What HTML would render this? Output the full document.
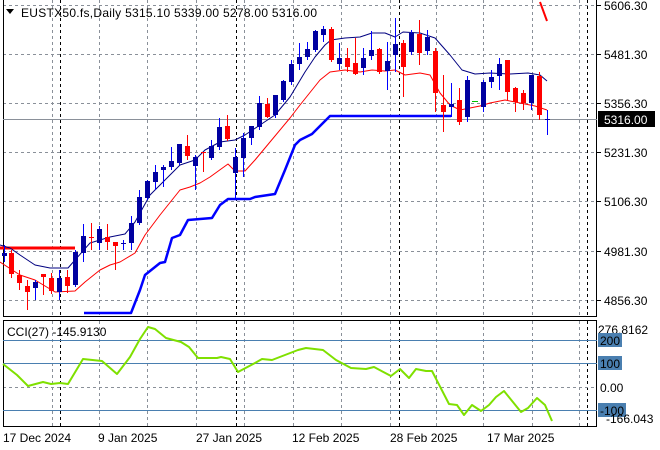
<!DOCTYPE html>
<html><head><meta charset="utf-8"><style>
html,body{margin:0;padding:0;background:#fff;width:660px;height:450px;overflow:hidden}
svg{display:block;font-family:"Liberation Sans",sans-serif}
</style></head><body>
<svg id="s" width="660" height="450" viewBox="0 0 660 450" xmlns="http://www.w3.org/2000/svg">
<rect width="660" height="450" fill="#fff"/>
<g id="grid" stroke="#8a9099" stroke-width="1" stroke-dasharray="3,3" fill="none"></g>
<g id="ind"></g>
<g id="cdl"></g>
<g id="txt" font-size="12" fill="#000"></g>
</svg>
<script>
var NS="http://www.w3.org/2000/svg";
function el(p,t,a,txt){var e=document.createElementNS(NS,t);for(var k in a)e.setAttribute(k,a[k]);if(txt!==undefined)e.textContent=txt;document.getElementById(p).appendChild(e);return e;}
[5,54,103,152,201,251,300].forEach(function(y){el('grid','line',{x1:3,x2:597,y1:y+.5,y2:y+.5});});
[52,99,147,196,244,293,341,390,436,483,532,579].forEach(function(x){el('grid','line',{x1:x+.5,x2:x+.5,y1:0,y2:316});el('grid','line',{x1:x+.5,x2:x+.5,y1:321,y2:426});});
[60,236,399,587].forEach(function(x){el('grid','line',{x1:x+.5,x2:x+.5,y1:0,y2:316,stroke:'#000'});el('grid','line',{x1:x+.5,x2:x+.5,y1:321,y2:426,stroke:'#000'});});
el('grid','line',{x1:3,x2:597,y1:387.5,y2:387.5});
el('ind','rect',{x:3.5,y:-1,width:593,height:317.5,fill:'none',stroke:'#000'});
el('ind','rect',{x:3.5,y:320.5,width:593,height:106,fill:'none',stroke:'#000'});
el('ind','line',{x1:3,x2:597,y1:119.5,y2:119.5,stroke:'#8a9099'});
[340,363,410].forEach(function(y){el('ind','line',{x1:3,x2:597,y1:y+.5,y2:y+.5,stroke:'#4a7fb0'});});
function pl(pts,c,w){el('ind','polyline',{points:pts.map(function(p){return p.join(',')}).join(' '),fill:'none',stroke:c,'stroke-width':w,'stroke-linejoin':'round'});}
pl([[0,248],[75,248]],'#ff0000',3);
pl([[540,2],[547,21]],'#ff0000',2);
pl([[84,313],[131,313],[140,290],[145,275],[160,263],[165,262],[172,238],[180,235],[188,220],[212,218],[220,205],[228,199],[250,199],[255,197],[275,194],[285,170],[295,145],[300,140],[312,134],[330,116],[451,116]],'#0000ff',2.5);
pl([[0,245],[10,248],[20,255],[35,265],[50,268],[68,268],[75,260],[90,243],[110,237],[125,234],[135,222],[150,195],[165,180],[180,165],[195,160],[205,150],[220,142],[235,140],[245,135],[260,125],[275,115],[290,97],[305,72],[315,57],[325,45],[331,40],[345,38],[360,37],[372,33],[385,33],[395,37],[403,32],[420,33],[435,38],[450,55],[462,70],[475,74],[490,73],[510,74],[528,73],[540,75],[547,81]],'#000080',1);
pl([[0,262],[20,275],[35,280],[55,292],[75,291],[85,282],[100,270],[110,265],[120,262],[135,253],[145,235],[160,215],[180,190],[190,187],[200,183],[210,177],[228,164],[235,171],[245,171],[255,160],[265,148],[290,118],[300,105],[320,80],[330,72],[345,70],[360,72],[372,70],[385,71],[395,70],[405,75],[420,73],[430,75],[440,93],[450,105],[460,110],[470,108],[480,106],[490,103],[505,100],[520,103],[535,106],[547,110]],'#ff0000',1);
pl([[3,364],[17,375],[28,386],[43,382],[51,384],[60,383],[68,384],[83,359],[102,361],[117,374],[130,357],[140,339],[148,327],[155,329],[166,338],[181,342],[189,347],[198,358],[217,358],[221,357],[230,359],[238,372],[255,363],[262,359],[272,360],[298,350],[306,348],[323,350],[336,360],[351,368],[366,369],[374,367],[391,376],[400,369],[409,378],[416,369],[426,371],[432,371],[449,404],[457,405],[464,415],[472,405],[481,411],[489,405],[496,397],[504,391],[521,412],[528,408],[537,398],[545,405],[552,421]],'#7fe000',2);
var C=[[4,'b',253,256,245,262],[11,'r',253,274,250,278],[19,'r',275,283,270,290],[27,'r',286,292,280,310],[35,'b',282,288,280,300],[43,'r',274,277,274,295],[51,'r',278,291,273,294],[59,'b',278,292,270,300],[67,'r',277,286,270,293],[75,'b',252,285,250,287],[83,'b',236,253,224,262],[91,'r',237,238,223,250],[99,'b',229,243,226,250],[107,'r',237,242,224,250],[115,'r',242,246,242,270],[123,'b',243,244,240,250],[131,'b',223,243,216,250],[139,'b',197,223,190,225],[147,'b',181,198,180,200],[155,'b',172,182,165,190],[163,'b',167,170,165,187],[171,'b',161,167,147,170],[179,'b',144,163,144,165],[187,'r',146,156,135,160],[195,'b',157,166,155,190],[203,'r',152,153,152,172],[211,'b',146,158,140,160],[219,'b',127,147,118,150],[227,'r',126,139,115,141],[235,'b',157,173,148,200],[243,'b',138,158,133,177],[251,'b',126,138,126,145],[259,'b',103,127,96,130],[267,'r',104,117,98,118],[275,'b',95,115,95,118],[283,'b',81,100,80,102],[291,'b',64,82,60,85],[299,'b',57,64,43,70],[307,'b',49,57,42,60],[315,'b',31,50,30,52],[323,'b',29,35,26,42],[331,'r',29,60,27,62],[339,'b',58,64,43,70],[347,'r',58,67,48,72],[355,'r',63,74,38,75],[363,'b',58,68,48,75],[371,'b',50,56,31,60],[379,'r',49,72,48,74],[387,'b',61,71,42,90],[395,'b',44,55,18,72],[403,'r',43,67,40,97],[411,'b',33,52,30,55],[419,'r',34,53,20,65],[427,'b',37,51,30,55],[435,'r',51,93,48,112],[443,'r',105,112,75,132],[451,'b',104,107,83,117],[459,'r',100,122,88,125],[467,'b',80,117,76,122],[483,'b',82,107,80,112],[491,'b',77,82,70,88],[499,'b',64,76,58,90],[507,'r',60,92,60,100],[515,'r',88,102,87,112],[523,'r',93,103,90,110],[531,'b',75,103,75,110],[539,'r',76,115,72,120],[547,'b',119,120,110,135]];
C.forEach(function(c){var wk=c[1]=='b'?'#0000ff':'#ff0000';
el('cdl','line',{x1:c[0]+.5,x2:c[0]+.5,y1:c[4],y2:c[5],stroke:wk,'stroke-width':1});
el('cdl','rect',{x:c[0]-2,y:c[2],width:5,height:Math.max(1,c[3]-c[2]),fill:c[1]=='b'?'#0000a0':'#ff0000'});});
el('cdl','line',{x1:472,x2:478,y1:101.5,y2:101.5,stroke:'#00c000'});
el('txt','path',{d:'M6 9 L14 9 L10 14 Z',fill:'#000'});
el('txt','text',{x:21,y:17,textLength:296,lengthAdjust:'spacing'},'EUSTX50.fs,Daily  5315.10 5339.00 5278.00 5316.00').setAttribute('xml:space','preserve');
[['5606.30',5],['5481.30',54],['5356.30',103],['5231.30',152],['5106.30',201],['4981.30',251],['4856.30',300]].forEach(function(p){
el('txt','line',{x1:597,x2:601,y1:p[1]+.5,y2:p[1]+.5,stroke:'#000'});el('txt','text',{x:604,y:p[1]+5},p[0]);});
el('txt','rect',{x:598,y:111,width:57,height:16,fill:'#000'});
el('txt','text',{x:604,y:124,fill:'#fff'},'5316.00');
el('txt','text',{x:598,y:334},'276.8162');
el('txt','rect',{x:598,y:333,width:24,height:14,fill:'#4a7fb0'});
el('txt','text',{x:600,y:345},'200');
el('txt','rect',{x:598,y:356,width:24,height:14,fill:'#4a7fb0'});
el('txt','text',{x:600,y:368},'100');
el('txt','text',{x:600,y:392},'0.00');
el('txt','rect',{x:598,y:403,width:28,height:14,fill:'#4a7fb0'});
el('txt','text',{x:600,y:415},'-100');
el('txt','text',{x:606,y:423},'-166.043');
el('txt','text',{x:7,y:336},'CCI(27) -145.9130');
[['17 Dec 2024',3],['9 Jan 2025',98],['27 Jan 2025',196],['12 Feb 2025',292],['28 Feb 2025',390],['17 Mar 2025',487]].forEach(function(d){el('txt','text',{x:d[1],y:442},d[0]);});
</script>
</body></html>
